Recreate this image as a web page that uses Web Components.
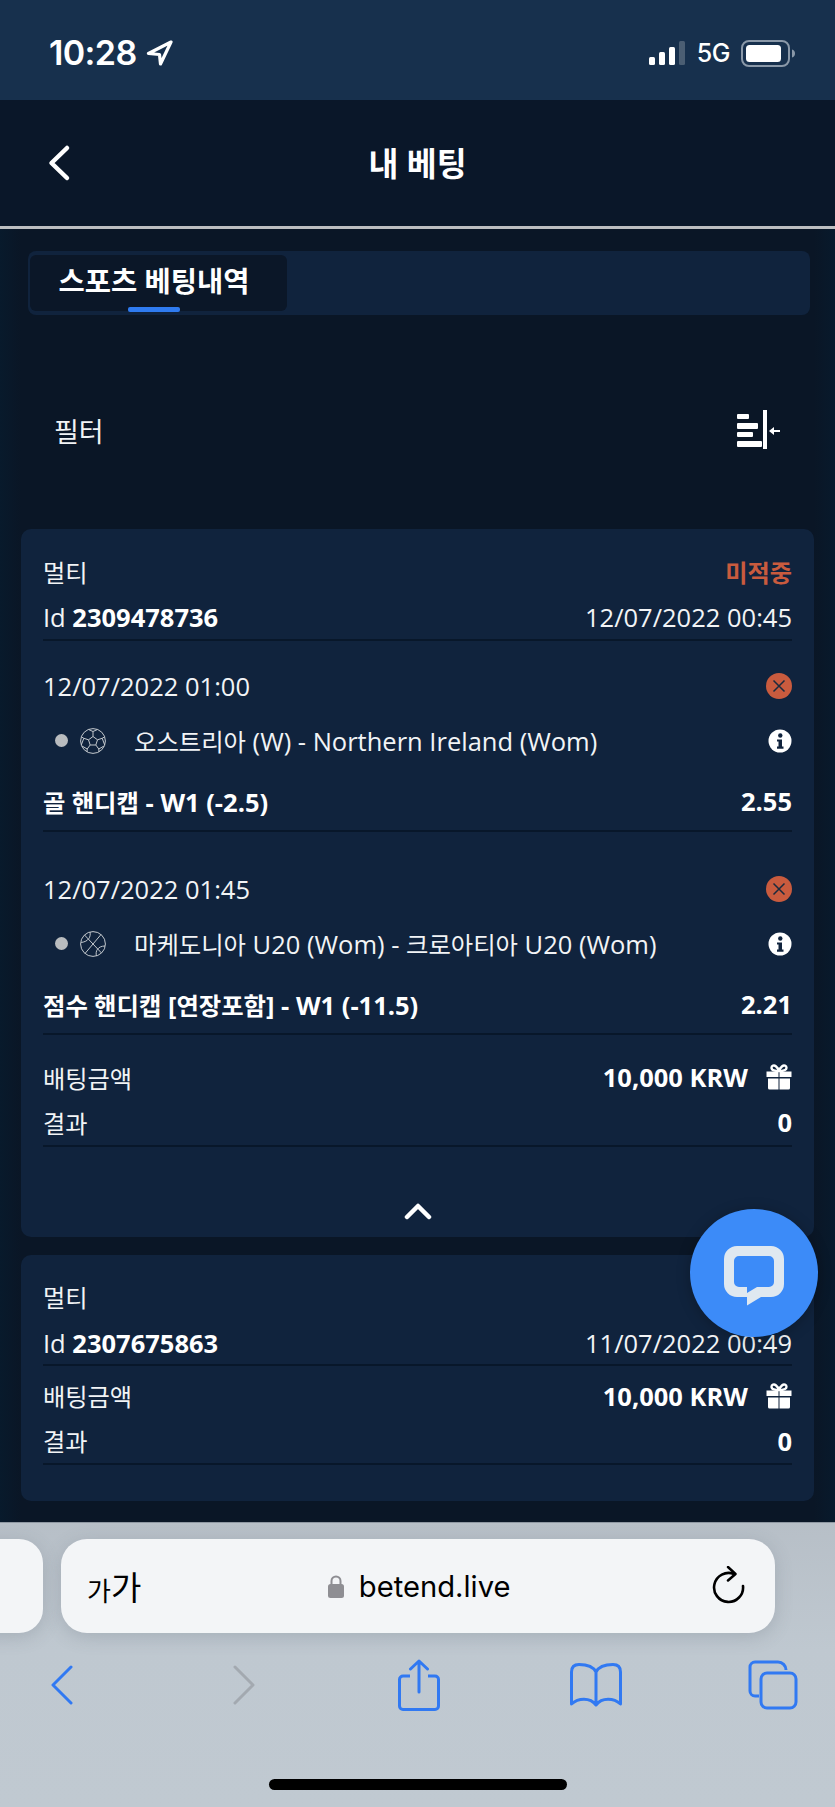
<!DOCTYPE html>
<html lang="ko"><head><meta charset="utf-8"><title>내 베팅</title>
<style>
html,body{margin:0;padding:0;background:#0a1727}
body{width:835px;height:1807px;overflow:hidden;font-family:"Open Sans","Noto Sans CJK KR",sans-serif;color:#fff}
</style></head><body>
<template id="t-app">
<style>
:host{display:flex;flex-direction:column;width:835px;height:1807px;position:relative;overflow:hidden}
main{flex:1;min-height:0;overflow:hidden;display:flex;flex-direction:column;padding:0 21px;box-sizing:border-box;background:linear-gradient(90deg,#081a2c 0,#0a1626 21px,#0a1626 814px,#081a2c 835px)}
.cards{display:flex;flex-direction:column;gap:18px}
</style>
<x-status></x-status><x-topbar heading="내 베팅"></x-topbar>
<main>
<x-tabs label="스포츠 베팅내역"></x-tabs>
<x-filter label="필터"></x-filter>
<div class="cards">
<x-bet-card kind="멀티" status="미적중" bet-id="2309478736" date="12/07/2022 00:45" expanded>
<x-selection date="12/07/2022 01:00" match="오스트리아 (W) - Northern Ireland (Wom)" market="골 핸디캡 - W1 (-2.5)" odds="2.55" sport="soccer"></x-selection>
<x-selection date="12/07/2022 01:45" match="마케도니아 U20 (Wom) - 크로아티아 U20 (Wom)" market="점수 핸디캡 [연장포함] - W1 (-11.5)" odds="2.21" sport="basket"></x-selection>
</x-bet-card>
<x-bet-card kind="멀티" bet-id="2307675863" date="11/07/2022 00:49"></x-bet-card>
</div>
</main>
<x-safari></x-safari>
<x-fab></x-fab>
</template>

<template id="t-status">
<style>
:host{display:flex;flex:none;height:100px;box-sizing:border-box;background:#17304d;align-items:center;justify-content:space-between;padding:0 39px 0 49px;font-family:Inter,"Liberation Sans",sans-serif;color:#fff}
.time{font-size:34px;font-weight:600;letter-spacing:-.6px;line-height:1}
.l,.r{display:flex;align-items:center;margin-top:6px}
.l{gap:9px}.r{gap:11px}
.g{font-size:25px;font-weight:500;letter-spacing:-.5px}
svg{display:block}
</style>
<div class="l"><span class="time">10:28</span>
<svg width="27" height="26" viewBox="0 0 27 26"><path d="M25 2 2.500 13.500 13.500 14.500 14.500 24Z" fill="none" stroke="#fff" stroke-width="3.200" stroke-linejoin="round"/></svg></div>
<div class="r">
<svg width="37" height="25" viewBox="0 0 37 25"><rect x="0" y="16" width="6" height="8" rx="1.500" fill="#fff"/><rect x="10" y="11" width="6" height="13" rx="1.500" fill="#fff"/><rect x="20" y="6" width="6" height="18" rx="1.500" fill="#fff"/><rect x="30" y="0" width="6" height="24" rx="1.500" fill="#4b5e73"/></svg>
<span class="g">5G</span>
<svg width="55" height="27" viewBox="0 0 55 27"><rect x="1" y="1" width="47" height="25" rx="7" fill="none" stroke="#8a98a8" stroke-width="2"/><rect x="5" y="5" width="35" height="17" rx="3.500" fill="#fff"/><path d="M51 9.500c2 .6 3 2 3 4s-1 3.400-3 4z" fill="#8a98a8"/></svg>
</div>
</template>

<template id="t-topbar">
<style>
:host{display:flex;flex:none;height:129px;box-sizing:border-box;background:#0a1729;border-bottom:3px solid #bcbec1;align-items:center;justify-content:center;position:relative;font-family:"Open Sans","Noto Sans CJK KR",sans-serif}
h1{margin:1px 0 0;font-size:32.500px;font-weight:700;color:#fff;line-height:1.2}
svg{position:absolute;left:46px;top:44px}
</style>
<svg width="26" height="38" viewBox="0 0 26 38"><path d="M21 4 5.500 19 21 34" fill="none" stroke="#fff" stroke-width="4.500" stroke-linecap="round" stroke-linejoin="round"/></svg>
<h1></h1>
</template>

<template id="t-tabs">
<style>
:host{display:block;flex:none;margin:22px 4px 0 7px;height:64px;box-sizing:border-box;background:#10233d;border-radius:8px;padding:4px 2px 4px}
.tab{box-sizing:border-box;width:257px;height:56px;background:#0b1728;border-radius:6px;display:flex;justify-content:center;align-items:center;position:relative;padding:0 9px 8px 0;font-size:28.500px;font-weight:700;color:#fff;font-family:"Open Sans","Noto Sans CJK KR",sans-serif}
.tab::after{content:"";position:absolute;left:98px;bottom:-1px;width:52px;height:5px;border-radius:2px;background:#2f7bf0}
</style>
<div class="tab"></div>
</template>

<template id="t-filter">
<style>
:host{display:flex;flex:none;height:100px;box-sizing:border-box;margin:67px 0 47px;padding:0 33px 4px;align-items:center;justify-content:space-between;font-size:27px;color:#f1f3f5;font-family:"Open Sans","Noto Sans CJK KR",sans-serif;font-weight:400}
svg{display:block}
</style>
<span></span>
<svg width="44" height="40" viewBox="0 0 44 40" fill="#fff"><rect x="0" y="4" width="12" height="5" rx="1"/><rect x="0" y="13" width="21" height="6" rx="1"/><rect x="0" y="22" width="16" height="5" rx="1"/><rect x="0" y="31" width="25" height="6" rx="1"/><rect x="26" y="0" width="4" height="39"/><rect x="35" y="20" width="8" height="2"/><path d="M32 21l5-4v8z"/></svg>
</template>

<template id="t-card">
<style>
:host{display:block;background:#10233d;border-radius:10px;padding:19.500px 22px 0;font-size:25.500px;color:#f2f4f6;font-family:"Open Sans","Noto Sans CJK KR",sans-serif}
.ko{font-size:.95em}
.row{display:flex;justify-content:space-between;align-items:center;height:45px}
b{font-weight:700;color:#fff}
.st{color:#c95b3e;font-weight:600}
.head{border-bottom:2px solid #08172a;height:43px;padding-top:2px}
.rt{display:flex;align-items:center;gap:18px}
.sum{padding-top:7px;border-bottom:2px solid #08172a}
:host([expanded]) .sum{padding-top:20px}
.sels{display:flex;flex-direction:column;gap:12px}
.more{display:none;height:90px;align-items:flex-end;justify-content:center;padding-bottom:17px;box-sizing:border-box}
:host([expanded]) .more{display:flex}
:host(:not([expanded])){padding-bottom:36px}
svg{display:block}
</style>
<div class="row"><span class="kind ko"></span><span class="st ko"></span></div>
<div class="row head"><span>Id <b class="id"></b></span><span class="dt"></span></div>
<div class="sels"><slot></slot></div>
<div class="sum">
<div class="row"><span class="ko">배팅금액</span><span class="rt"><b>10,000 KRW</b>
<svg width="26" height="26" viewBox="0 0 26 26" fill="#fff"><path d="M.5 7.500h12V13H.5zM13.500 7.500h12V13h-12zM2 14.500h10.500V25.500H3.500A1.500 1.500 0 0 1 2 24zM13.500 14.500H24V24a1.500 1.500 0 0 1-1.500 1.500h-9z"/><path d="M13 7C9 7 5.500 6.500 5.500 3.800 5.500 1.800 8 .8 9.800 2.200 11.300 3.400 12.500 5 13 7c.5-2 1.700-3.600 3.200-4.800C18 .8 20.500 1.800 20.500 3.800 20.500 6.500 17 7 13 7z" fill="none" stroke="#fff" stroke-width="2.400"/></svg></span></div>
<div class="row"><span class="ko">결과</span><b>0</b></div>
</div>
<div class="more"><svg width="28" height="18" viewBox="0 0 28 18"><path d="M3 15 14 4l11 11" fill="none" stroke="#fff" stroke-width="4.500" stroke-linecap="round" stroke-linejoin="round"/></svg></div>
</template>

<template id="t-sel">
<style>
:host{display:block;height:191px;box-sizing:border-box;padding-top:23px;border-bottom:2px solid #08172a;font-size:25.500px}
.row{display:flex;justify-content:space-between;align-items:center}
.d{height:45px}
.m{height:64px}
.k{height:57px;font-weight:700;color:#fff}
.lf{display:flex;align-items:center}
.dot{width:13px;height:13px;border-radius:50%;background:#b9bcbf;margin:0 12px 0 12px}
.t{margin-left:28px}
svg{display:block}
</style>
<div class="row d"><span class="date"></span>
<svg width="26" height="26" viewBox="0 0 26 26"><circle cx="13" cy="13" r="13" fill="#c95b3e"/><path d="M7.500 7.500l11 11M18.500 7.500l-11 11" stroke="#1b2a3d" stroke-width="1.500"/></svg></div>
<div class="row m"><span class="lf"><i class="dot"></i><span class="ic"></span><span class="t"></span></span>
<svg width="24" height="24" viewBox="0 0 24 24"><circle cx="12" cy="12" r="11.500" fill="#fff"/><circle cx="12.300" cy="6.500" r="2.200" fill="#10233d"/><path d="M9 10.500h5v7h1.500v2.200h-6.500v-2.200h1.500v-5H9z" fill="#10233d"/></svg></div>
<div class="row k"><span class="mk"></span><span class="od"></span></div>
</template>

<template id="t-safari">
<style>
:host{display:block;flex:none;height:285px;position:relative;overflow:hidden;background:linear-gradient(#b7bfc7,#bfc8d0 45%,#c0c9d1);box-shadow:inset 0 1px 0 #8f98a2;font-family:Inter,"Liberation Sans",sans-serif}
.bars{display:flex;gap:18px;margin:17px 0 0 -100px;height:94px}
.stub{width:143px;flex:none;background:#f3f5f7;border-radius:24px;box-shadow:0 4px 18px rgba(80,90,105,.22)}
.url{width:714px;flex:none;background:#f3f5f7;border-radius:26px;box-shadow:0 4px 18px rgba(80,90,105,.22);display:flex;align-items:center;justify-content:space-between;box-sizing:border-box;padding:0 30px 0 26px;color:#000}
.aa{font-family:"Noto Sans CJK KR",sans-serif;line-height:1;font-size:33px;display:flex;align-items:flex-end}
.aa small{font-size:26px}
.c{display:flex;align-items:center;gap:15px;font-size:29.200px;margin-right:15px}
.tb{display:flex;align-items:center;padding:0 0 0 51px;height:52px;margin-top:26px}
.tb svg{display:block;flex:none}
.home{position:absolute;left:269px;top:257px;width:298px;height:11px;border-radius:6px;background:#000}
</style>
<div class="bars"><div class="stub"></div>
<div class="url"><span class="aa"><small>가</small>가</span>
<span class="c"><svg width="16" height="23" viewBox="0 0 16 23"><path d="M3.500 10V6a4.500 4.500 0 0 1 9 0v4" fill="none" stroke="#8e8e93" stroke-width="2"/><rect x="0" y="9" width="16" height="14" rx="2.500" fill="#8e8e93"/></svg><span>betend.live</span></span>
<svg width="33" height="40" viewBox="0 0 33 40"><path d="M16 1l7.500 7-7.500 6.500" fill="none" stroke="#000" stroke-width="2.500" stroke-linecap="round" stroke-linejoin="round"/><path d="M22 8A14.500 14.500 0 1 0 31 20" fill="none" stroke="#000" stroke-width="2.600" stroke-linecap="round"/></svg></div></div>
<div class="tb">
<svg width="22" height="40" viewBox="0 0 22 40"><path d="M20 2 2 20l18 18" fill="none" stroke="#3179f2" stroke-width="3" stroke-linecap="round" stroke-linejoin="round"/></svg>
<svg style="margin-left:159px" width="24" height="40" viewBox="0 0 24 40"><path d="M3 2l18 18L3 38" fill="none" stroke="#a3a9b0" stroke-width="3" stroke-linecap="round" stroke-linejoin="round"/></svg>
<svg style="margin-left:142px" width="42" height="52" viewBox="0 0 42 52"><path d="M12 17H5a3.500 3.500 0 0 0-3.500 3.500V47A3.500 3.500 0 0 0 5 50.500h32a3.500 3.500 0 0 0 3.500-3.500V20.500A3.500 3.500 0 0 0 37 17h-7" fill="none" stroke="#3179f2" stroke-width="3"/><path d="M21 33V2M12.500 10 21 2l8.500 8" fill="none" stroke="#3179f2" stroke-width="3" stroke-linecap="round" stroke-linejoin="round"/></svg>
<svg style="margin-left:130px" width="52" height="44" viewBox="0 0 52 44"><path d="M26 9V40M26 9C23 3 16 1.500 9 1.500 4 1.500 1.500 4 1.500 9V41C8 35 20 34 26 42 32 34 44 35 50.500 41V9C50.500 4 48 1.500 43 1.500 36 1.500 29 3 26 9Z" fill="none" stroke="#3179f2" stroke-width="3" stroke-linejoin="round"/></svg>
<svg style="margin-left:126px" width="50" height="50" viewBox="0 0 50 50"><path d="M11 36H7a5 5 0 0 1-5-5V7a5 5 0 0 1 5-5h23a8 8 0 0 1 8 8" fill="none" stroke="#3179f2" stroke-width="3"/><rect x="13" y="13" width="35" height="35" rx="6" fill="none" stroke="#3179f2" stroke-width="3"/></svg>
</div>
<div class="home"></div>
</template>

<template id="t-fab">
<style>
:host{position:absolute;left:690px;top:1209px;width:128px;height:128px;border-radius:50%;background:#3c8bf8;display:flex;align-items:center;justify-content:center;box-shadow:0 2px 14px rgba(0,0,0,.25)}
svg{display:block;margin-top:6px}
</style>
<svg width="60" height="60" viewBox="0 0 60 60"><path fill-rule="evenodd" fill="#dfe8f0" d="M13 0H47A13 13 0 0 1 60 13V38A13 13 0 0 1 47 51H37L23 59.500V51H13A13 13 0 0 1 0 38V13A13 13 0 0 1 13 0ZM15 10A5 5 0 0 0 10 15V36A5 5 0 0 0 15 41H23V47L33 41H45A5 5 0 0 0 50 36V15A5 5 0 0 0 45 10Z"/></svg>
</template>

<x-app></x-app>
<script>
const mount=(el,id)=>{const r=el.attachShadow({mode:'open'});r.appendChild(document.getElementById(id).content.cloneNode(true));return r};
const ko=(node,text)=>{node.textContent='';text.split(/([\uAC00-\uD7A3]+(?: [\uAC00-\uD7A3]+)*)/).forEach((p,i)=>{if(!p)return;if(i%2){const s=document.createElement('span');s.style.fontSize='.955em';s.textContent=p;node.appendChild(s)}else node.appendChild(document.createTextNode(p))})};
const icons={
soccer:'<svg width="26" height="26" viewBox="0 0 26 26" fill="none" stroke="#c3c8cd" stroke-width="1"><circle cx="13" cy="13" r="12.400"/><path d="M13 8.500l4.500 3.300-1.700 5.200h-5.600l-1.700-5.200zM13 8.500V3.500M17.500 11.800l4.700-1.500M15.800 17l3 4M10.200 17l-3 4M8.500 11.800l-4.700-1.500M8.500 1.500 13 3.500l4.500-2M22.200 10.300l2.600-1.600M22.200 10.300 24.700 17M18.800 21l.2 3M18.800 21 24 18M7.200 21l-.2 3M7.200 21 2 18M3.800 10.300 1.200 8.700M3.800 10.300 1.300 17"/></svg>',
basket:'<svg width="26" height="26" viewBox="0 0 26 26" fill="none" stroke="#c3c8cd" stroke-width="1"><circle cx="13" cy="13" r="12.400"/><path d="M4.500 4 21.500 22M21 3.500 5 22.500M10 1C11 6 8.500 10.500 1.200 11.500M25 15C18 15 15 20 16.500 25"/></svg>'};
class App extends HTMLElement{constructor(){super();mount(this,'t-app')}}
class Status extends HTMLElement{constructor(){super();mount(this,'t-status')}}
class Topbar extends HTMLElement{constructor(){super();this.r=mount(this,'t-topbar')}connectedCallback(){this.r.querySelector('h1').textContent=this.getAttribute('heading')}}
class Tabs extends HTMLElement{constructor(){super();this.r=mount(this,'t-tabs')}connectedCallback(){this.r.querySelector('.tab').textContent=this.getAttribute('label')}}
class Filter extends HTMLElement{constructor(){super();this.r=mount(this,'t-filter')}connectedCallback(){this.r.querySelector('span').textContent=this.getAttribute('label')}}
class Card extends HTMLElement{constructor(){super();this.r=mount(this,'t-card')}connectedCallback(){const q=s=>this.r.querySelector(s),a=n=>this.getAttribute(n)||'';q('.kind').textContent=a('kind');q('.st').textContent=a('status');q('.id').textContent=a('bet-id');q('.dt').textContent=a('date')}}
class Sel extends HTMLElement{constructor(){super();this.r=mount(this,'t-sel')}connectedCallback(){const q=s=>this.r.querySelector(s),a=n=>this.getAttribute(n)||'';q('.date').textContent=a('date');ko(q('.t'),a('match'));ko(q('.mk'),a('market'));q('.od').textContent=a('odds');q('.ic').innerHTML=icons[a('sport')]}}
class Safari extends HTMLElement{constructor(){super();mount(this,'t-safari')}}
class Fab extends HTMLElement{constructor(){super();mount(this,'t-fab')}}
[['x-status',Status],['x-topbar',Topbar],['x-tabs',Tabs],['x-filter',Filter],['x-selection',Sel],['x-bet-card',Card],['x-safari',Safari],['x-fab',Fab],['x-app',App]].forEach(([n,c])=>customElements.define(n,c));
</script>
</body></html>
